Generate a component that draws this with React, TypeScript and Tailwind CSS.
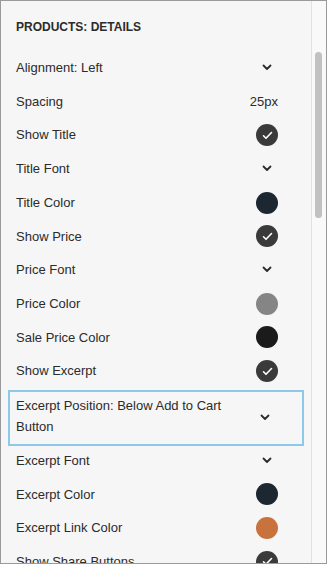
import type { ReactNode } from "react";

type Control =
  | { kind: "chevron" }
  | { kind: "check" }
  | { kind: "swatch"; color: string }
  | { kind: "text"; value: string };

type Row = { label: string; control: Control; active?: boolean };

const rows: Row[] = [
  { label: "Alignment: Left", control: { kind: "chevron" } },
  { label: "Spacing", control: { kind: "text", value: "25px" } },
  { label: "Show Title", control: { kind: "check" } },
  { label: "Title Font", control: { kind: "chevron" } },
  { label: "Title Color", control: { kind: "swatch", color: "#1c2731" } },
  { label: "Show Price", control: { kind: "check" } },
  { label: "Price Font", control: { kind: "chevron" } },
  { label: "Price Color", control: { kind: "swatch", color: "#858585" } },
  { label: "Sale Price Color", control: { kind: "swatch", color: "#1b1b1b" } },
  { label: "Show Excerpt", control: { kind: "check" } },
  { label: "Excerpt Position: Below Add to Cart Button", control: { kind: "chevron" }, active: true },
  { label: "Excerpt Font", control: { kind: "chevron" } },
  { label: "Excerpt Color", control: { kind: "swatch", color: "#1c2731" } },
  { label: "Excerpt Link Color", control: { kind: "swatch", color: "#c8733e" } },
  { label: "Show Share Buttons", control: { kind: "check" } },
];

function Chevron() {
  return (
    <svg width="10" height="7" viewBox="0 0 10 7" fill="none">
      <path d="M1.5 1.5 5 5l3.5-3.5" stroke="#2b2b2b" strokeWidth="1.8" strokeLinecap="round" strokeLinejoin="round" />
    </svg>
  );
}

function Check() {
  return (
    <span className="flex h-[22px] w-[22px] items-center justify-center rounded-full bg-[#3a3a3a]">
      <svg width="11" height="9" viewBox="0 0 11 9" fill="none">
        <path d="M1.5 4.8 4 7.3 9.5 1.5" stroke="#fff" strokeWidth="1.6" strokeLinecap="round" strokeLinejoin="round" />
      </svg>
    </span>
  );
}

function renderControl(control: Control): ReactNode {
  switch (control.kind) {
    case "chevron":
      return <Chevron />;
    case "check":
      return <Check />;
    case "swatch":
      return <span className="h-[22px] w-[22px] rounded-full" style={{ backgroundColor: control.color }} />;
    case "text":
      return <span className="whitespace-nowrap text-[13px] text-[#2b2b2b]">{control.value}</span>;
  }
}

function SettingRow({ row }: { row: Row }) {
  const slot = (
    <div className={`flex w-[22px] shrink-0 items-center ${row.control.kind === "text" ? "justify-end" : "justify-center"}`}>
      {renderControl(row.control)}
    </div>
  );

  if (row.active) {
    return (
      <div className="mx-[7px] mt-[2px] mb-[-2px] flex h-[56px] items-center border-2 border-[#8cc8ea] pl-[6px] pr-[26px]">
        <p className="mb-[4px] flex-1 pr-[20px] text-[13px] leading-[21px] text-[#2b2b2b]">{row.label}</p>
        {slot}
      </div>
    );
  }

  return (
    <div className="flex h-[33.7px] items-center pl-[15px] pr-[33px]">
      <p className="flex-1 text-[13px] text-[#2b2b2b]">{row.label}</p>
      {slot}
    </div>
  );
}

export default function App() {
  return (
    <main
      className="flex h-[564px] w-[327px] overflow-hidden border border-[#9a9a9a] bg-[#f6f6f6]"
      style={{ fontFamily: "'Liberation Sans', Arial, sans-serif" }}
    >
      <section className="flex-1 overflow-hidden">
        <h2 className="pl-[15px] pt-[17px] pb-[15px] text-[12px] font-bold uppercase text-[#2b2b2b]">
          Products: Details
        </h2>
        <div className="flex flex-col">
          {rows.map((row) => (
            <SettingRow key={row.label} row={row} />
          ))}
        </div>
      </section>
      <aside className="w-[15px] shrink-0 border-l border-[#e2e2e2] bg-[#f9f9f9] pt-[51px]">
        <div className="ml-[3px] h-[166px] w-[7px] rounded-full bg-[#c1c1c1]" />
      </aside>
    </main>
  );
}
